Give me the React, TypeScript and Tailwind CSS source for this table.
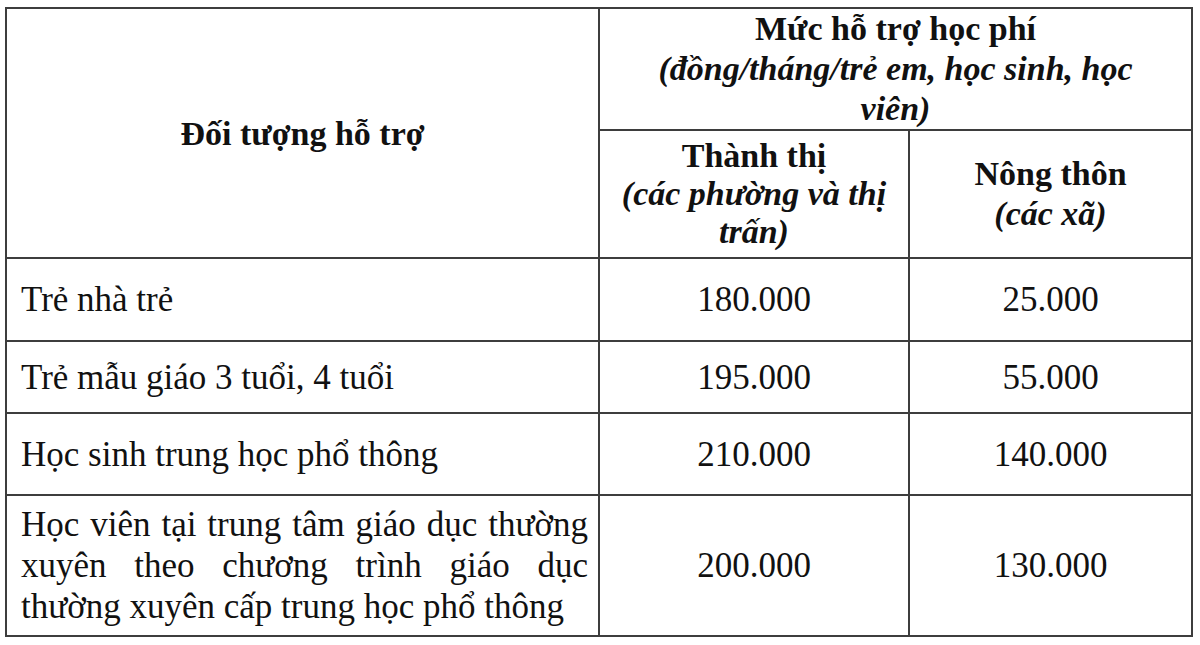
const rows = [
  { label: "Trẻ nhà trẻ", urban: "180.000", rural: "25.000", height: "h-[83px]" },
  { label: "Trẻ mẫu giáo 3 tuổi, 4 tuổi", urban: "195.000", rural: "55.000", height: "h-[72px]" },
  { label: "Học sinh trung học phổ thông", urban: "210.000", rural: "140.000", height: "h-[82px]" },
]

const cell = "border-2 border-[#3d3d3d]"

function LongLabel() {
  // the last label is justified like in the printed document
  return (
    <div className="leading-[41px]">
      <span className="block [text-align-last:justify]">Học viên tại trung tâm giáo dục thường</span>
      <span className="block [text-align-last:justify]">xuyên theo chương trình giáo dục</span>
      <span className="block">thường xuyên cấp trung học phổ thông</span>
    </div>
  )
}

export default function App() {
  return (
    <div className="w-[1200px] h-[645px] bg-white overflow-hidden pt-[7px] pl-[5px] font-['Liberation_Serif','Times_New_Roman',serif] text-[#111111]">
      <table className="border-collapse w-[1186px] table-fixed">
        <colgroup>
          <col className="w-[593px]" />
          <col className="w-[310px]" />
          <col className="w-[283px]" />
        </colgroup>
        <thead>
          <tr className="h-[114px]">
            <th rowSpan={2} className={`${cell} text-[34px] font-bold text-center align-middle`}>
              Đối tượng hỗ trợ
            </th>
            <th colSpan={2} className={`${cell} text-center align-middle leading-[40px] text-[34px]`}>
              <div className="font-bold">Mức hỗ trợ học phí</div>
              <div className="italic font-bold">
                (đồng/tháng/trẻ em, học sinh, học
                <br />
                viên)
              </div>
            </th>
          </tr>
          <tr className="h-[128px]">
            <th className={`${cell} text-center align-middle text-[34px] leading-[38px]`}>
              <div className="font-bold">Thành thị</div>
              <div className="italic font-bold">
                (các phường và thị
                <br />
                trấn)
              </div>
            </th>
            <th className={`${cell} text-center align-middle text-[34px] leading-[40px]`}>
              <div className="font-bold">Nông thôn</div>
              <div className="italic font-bold">(các xã)</div>
            </th>
          </tr>
        </thead>
        <tbody className="text-[35px] leading-[41px]">
          {rows.map((row) => (
            <tr key={row.label} className={row.height}>
              <td className={`${cell} pl-[14px] pr-[10px] align-middle`}>{row.label}</td>
              <td className={`${cell} text-center align-middle`}>{row.urban}</td>
              <td className={`${cell} text-center align-middle`}>{row.rural}</td>
            </tr>
          ))}
          <tr className="h-[141px]">
            <td className={`${cell} pl-[14px] pr-[10px] align-middle`}>
              <LongLabel />
            </td>
            <td className={`${cell} text-center align-middle`}>200.000</td>
            <td className={`${cell} text-center align-middle`}>130.000</td>
          </tr>
        </tbody>
      </table>
    </div>
  )
}
